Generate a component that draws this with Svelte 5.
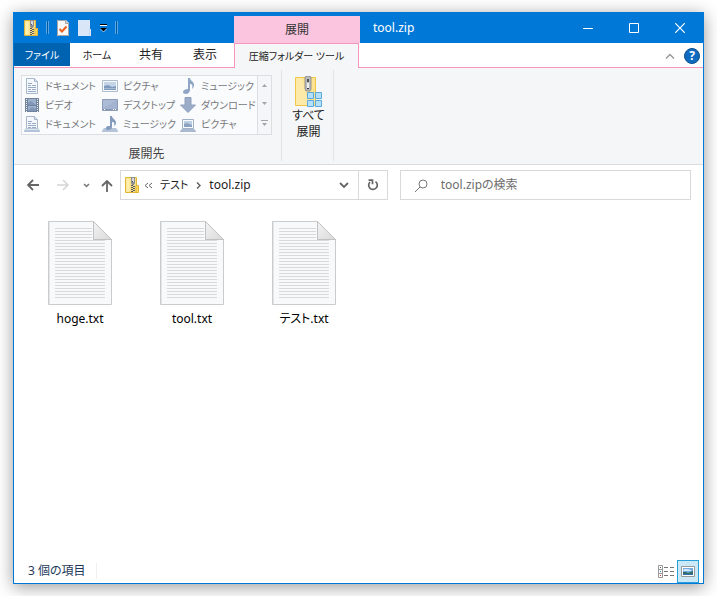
<script lang="ts">
	type Target = { icon: string; label: string };

	const tabs = ['ホーム', '共有', '表示'];

	const targets: Target[] = [
		{ icon: 'document', label: 'ドキュメント' },
		{ icon: 'picture', label: 'ピクチャ' },
		{ icon: 'music', label: 'ミュージック' },
		{ icon: 'video', label: 'ビデオ' },
		{ icon: 'desktop', label: 'デスクトップ' },
		{ icon: 'download', label: 'ダウンロード' },
		{ icon: 'document-lib', label: 'ドキュメント' },
		{ icon: 'music-lib', label: 'ミュージック' },
		{ icon: 'picture-lib', label: 'ピクチャ' }
	];

	const files = ['hoge.txt', 'tool.txt', 'テスト.txt'];
	const lines = Array.from({ length: 24 }, (_, i) => 7 + i * 3);

	let query = $state('');
	let selected = $state('');
</script>

<svelte:head>
	<title>tool.zip</title>
</svelte:head>

{#snippet zip()}
	<svg width="14" height="16" viewBox="0 0 14 16">
		<path d="M.5.5h11v8h1.500v7H.5z" fill="#fbe08a" stroke="#dfb53a" />
		<path d="M1.500 1.500h3v13h-3z" fill="#fff0ae" />
		<path d="M11 8.500h2.500v7H11z" fill="#ffd957" stroke="#dfb53a" />
		<path d="M6 0h4v6l-1 2H7L6 6z" fill="#8b8e91" />
		<path d="M7 1h2v4H7z" fill="#d8dadd" />
		<path d="M7 4h1v1H7zM6 8h2v1H6zM8 9h2v1H8zM6 10h2v1H6zM8 11h2v1H8zM6 12h2v1H6zM8 13h2v1H8zM6 14h2v1H6z" fill="#55585c" />
	</svg>
{/snippet}

{#snippet targetIcon(name: string)}
	<svg width="16" height="16" viewBox="0 0 16 16">
		{#if name === 'document' || name === 'document-lib'}
			<path d="M2.500.5h8l3 3v12h-11z" fill="#f4f8fd" stroke="#a8b7cc" />
			<path d="M10.500.5v3h3" fill="#d5e0ee" stroke="#a8b7cc" />
			<path d="M4 5.500h4M4 7.500h3M8 7.500h4M4 9.500h8M4 11.500h3M8 11.500h4M4 13.500h8" stroke="#98abc5" />
			{#if name === 'document-lib'}
				<path d="M2 12h12l2 3v1H0v-1z" fill="#b4c3d7" />
				<path d="M2 13.500h12" stroke="#dce5f0" />
			{/if}
		{:else if name === 'picture'}
			<path d="M.5 2.500h15v11H.5z" fill="#f7fafd" stroke="#aebdce" />
			<path d="M2 4h12v8H2z" fill="#c4d5e8" />
			<path d="M2 8l4-1 4 2 4-1v4H2z" fill="#7f9abf" />
			<path d="M2 10.500h12" stroke="#a6bbd3" />
		{:else if name === 'music'}
			<path d="M8 0h2c0 3 4 3 4 7 0 2-1 3-2 4 1-4 0-5-2-5v6c0 2-2 4-4 4s-3-1-3-2c0-2 3-3 5-3z" fill="#8fa5c5" />
		{:else if name === 'music-lib'}
			<path d="M2 12h12l2 3v1H0v-1z" fill="#b4c3d7" />
			<path d="M8 0h2c0 3 4 3 4 7 0 2-1 2-2 3 1-3 0-4-2-4v5c0 2-2 3-4 3s-2-1-2-2c0-2 2-2 4-2z" fill="#849bbd" />
		{:else if name === 'video'}
			<path d="M1 1h14v14H1z" fill="#72839c" />
			<path d="M4 2h8v6H4zM4 9h8v5H4z" fill="#9db0cc" />
			<path d="M4 6l3-2 5 4H4zM4 13l4-3 4 2v2H4z" fill="#8197b8" />
			<path d="M2.500 2v13M13.500 2v13" stroke="#edf2f8" stroke-dasharray="1 1" />
		{:else if name === 'desktop'}
			<path d="M.5 2.500h15v11H.5z" fill="#a3b3d0" stroke="#8d9db8" />
			<path d="M1 3h14L1 11z" fill="#adbcd6" />
			<path d="M1 12.500h14" stroke="#8796b0" />
			<path d="M2 12.500h1M11 12.500h3" stroke="#fff" stroke-dasharray="1 1" />
		{:else if name === 'download'}
			<path d="M5 .5h6V8h4.500L8 15.500.500 8H5z" fill="#9bacc9" stroke="#8fa0be" />
		{:else if name === 'picture-lib'}
			<path d="M2.500 3.500h11v9h-11z" fill="#f7fafd" stroke="#9fb0c7" />
			<path d="M4 5h8v6H4z" fill="#bccfe4" />
			<path d="M4 8l3-1 5 2v2H4z" fill="#8ba2c1" />
			<path d="M2 13h12l2 2v1H0v-1z" fill="#a8b9d0" />
		{/if}
	</svg>
{/snippet}

<main class="window">
	<header class="titlebar">
		<div class="quick">
			{@render zip()}
			<span class="grip"></span>
			<div class="shortcuts">
				<button aria-label="プロパティ">
					<svg width="12" height="16" viewBox="0 0 12 16">
						<path d="M0 0h9l3 3v13H0z" fill="#f8f8f8" />
						<path d="M.5.5h8l3 3v12H.5z" fill="none" stroke="#a5a5a5" />
						<path d="M8.500.5v3h3" fill="#ddd" stroke="#a5a5a5" />
						<path d="M2.500 9l2.500 2.500L9.500 6.500" fill="none" stroke="#ee6022" stroke-width="2" />
					</svg>
				</button>
				<button aria-label="新しいフォルダー">
					<svg width="13" height="16" viewBox="0 0 13 16">
						<path d="M0 0h12v9h1v7H0z" fill="#d9e6f8" />
						<path d="M11.500 9v6.500" stroke="#c1d5ef" />
					</svg>
				</button>
				<button aria-label="カスタマイズ">
					<svg width="7" height="8" viewBox="0 0 7 8">
						<path d="M0 0h7v1H0z" fill="#000" />
						<path d="M0 1h7v1H0z" fill="#fff" />
						<path d="M0 4h7L3.500 7.500z" fill="#000" />
						<path d="M0 4.500l3.500 3.500L7 4.500" fill="none" stroke="#fff" stroke-width=".6" />
					</svg>
				</button>
			</div>
			<span class="grip"></span>
		</div>
		<div class="context">展開</div>
		<h1>tool.zip</h1>
		<div class="controls">
			<button aria-label="最小化">
				<svg width="10" height="10"><path d="M0 5.500h10" stroke="#fff" /></svg>
			</button>
			<button aria-label="最大化">
				<svg width="10" height="10"><path d="M.5.5h9v9h-9z" fill="none" stroke="#fff" /></svg>
			</button>
			<button aria-label="閉じる">
				<svg width="10" height="10"><path d="M0 0l10 10M10 0L0 10" stroke="#fff" stroke-width="1.200" /></svg>
			</button>
		</div>
	</header>

	<nav class="tabs">
		<button class="file">ファイル</button>
		{#each tabs as tab}
			<button class="tab">{tab}</button>
		{/each}
		<button class="tab active">圧縮フォルダー ツール</button>
		<div class="help">
			<button aria-label="リボンの最小化">
				<svg width="10" height="6"><path d="M1 5.500l4-4 4 4" fill="none" stroke="#9a9a9a" stroke-width="1.500" /></svg>
			</button>
			<button class="question" aria-label="ヘルプ">?</button>
		</div>
	</nav>

	<section class="ribbon">
		<div class="group">
			<div class="gallery">
				<div class="targets">
					{#each targets as target}
						<button disabled>
							{@render targetIcon(target.icon)}
							<span>{target.label}</span>
						</button>
					{/each}
				</div>
				<div class="scroll">
					<button disabled aria-label="上へ">
						<svg width="5" height="3"><path d="M0 3L2.500 0 5 3z" fill="#a0a4ad" /></svg>
					</button>
					<button disabled aria-label="下へ">
						<svg width="5" height="3"><path d="M0 0l2.500 3L5 0z" fill="#a0a4ad" /></svg>
					</button>
					<button disabled aria-label="その他">
						<svg width="7" height="6"><path d="M0 .5h7" stroke="#a0a4ad" /><path d="M1 3l2.500 3L6 3z" fill="#a0a4ad" /></svg>
					</button>
				</div>
			</div>
			<div class="caption">展開先</div>
		</div>
		<button class="extract">
			<svg width="28" height="32" viewBox="0 0 28 32">
				<path d="M.5 1.500h20v28H.5z" fill="#fce293" stroke="#efc84a" />
				<path d="M1 2h6l7 27H1z" fill="#fdeaa9" />
				<path d="M10 1q3-2 6 0v12l-1 2h-4l-1-2z" fill="#b9bbbe" stroke="#77797c" stroke-width=".7" />
				<path d="M12 3h2v3h-2z" fill="#55575a" />
				<path d="M12 7h2v5h-2z" fill="#eee" />
				<path d="M12 12h2v1h-2z" fill="#333" />
				<path d="M12.500 16.500h6v6h-6zM20.500 16.500h6v6h-6zM12.500 24.500h6v6h-6zM20.500 24.500h6v6h-6z" fill="#b5e0fb" stroke="#5ba9dc" />
			</svg>
			<span>すべて</span>
			<span>展開</span>
		</button>
	</section>

	<div class="address">
		<div class="history">
			<button aria-label="戻る">
				<svg width="12" height="12"><path d="M12 6H1M6 1L1 6l5 5" fill="none" stroke="#666" stroke-width="1.800" /></svg>
			</button>
			<button disabled aria-label="進む">
				<svg width="12" height="12"><path d="M0 6h11M6 1l5 5-5 5" fill="none" stroke="#d5d5d5" stroke-width="1.500" /></svg>
			</button>
			<button class="recent" aria-label="最近表示した場所">
				<svg width="7" height="5"><path d="M1 1l2.500 2.500L6 1" fill="none" stroke="#777" stroke-width="1.500" /></svg>
			</button>
			<button aria-label="上へ">
				<svg width="12" height="13"><path d="M6 13V2M1 7l5-5 5 5" fill="none" stroke="#666" stroke-width="1.800" /></svg>
			</button>
		</div>
		<div class="path">
			{@render zip()}
			<svg class="chevrons" width="9" height="7"><path d="M4 1L1 3.500 4 6M8 1L5 3.500 8 6" fill="none" stroke="#666" /></svg>
			<button class="crumb">テスト</button>
			<svg class="chevron" width="5" height="7"><path d="M1 .5l3 3-3 3" fill="none" stroke="#666" stroke-width="1.500" /></svg>
			<button>tool.zip</button>
			<button class="drop" aria-label="以前の場所">
				<svg width="10" height="7"><path d="M1 1l4 4 4-4" fill="none" stroke="#666" stroke-width="1.800" /></svg>
			</button>
			<button class="refresh" aria-label="更新">
				<svg width="12" height="12" viewBox="0 0 12 12">
					<path d="M3 3A4.300 4.300 0 1 0 8.500 2.600" fill="none" stroke="#666" stroke-width="1.700" />
					<path d="M1.500 1.200h4v4" fill="none" stroke="#666" stroke-width="1.700" />
				</svg>
			</button>
		</div>
		<label class="search">
			<svg width="13" height="13"><circle cx="8" cy="5" r="4" fill="none" stroke="#777" /><path d="M5 8l-5 5" stroke="#777" /></svg>
			<input type="text" bind:value={query} placeholder="tool.zipの検索" aria-label="tool.zipの検索" />
		</label>
	</div>

	<section class="files">
		{#each files as file}
			<button class:selected={selected === file} onclick={() => (selected = file)}>
				<svg width="64" height="84" viewBox="0 0 64 84">
					<defs>
						<linearGradient id="fold" x1="0" y1="0" x2="1" y2="1">
							<stop offset="0" stop-color="#f4f4f4" />
							<stop offset="1" stop-color="#d9d9d9" />
						</linearGradient>
					</defs>
					<path d="M.5.5h45l18 18v65H.5z" fill="#f8f9fa" stroke="#c9cbcd" />
					<path d="M1.500 1v82" stroke="#e5e6e7" />
					{#each lines as y}
						<path d="M7 {y + 0.5}H{y < 19 ? 44 : 57}" stroke="#d7d9db" />
					{/each}
					<path d="M45.500.5v18h18z" fill="url(#fold)" stroke="#c0c1c2" />
				</svg>
				<span>{file}</span>
			</button>
		{/each}
	</section>

	<footer class="status">
		<span class="count">3 個の項目</span>
		<button class="view" aria-label="詳細">
			<svg width="16" height="13" viewBox="0 0 16 13">
				<path d="M.5.5h4v12h-4zM.5 4.500h4M.5 8.500h4" fill="#fff" stroke="#999" />
				<path d="M2 2h1v1H2z" fill="#555" /><path d="M2 6h1v1H2z" fill="#3b82c4" /><path d="M2 10h1v1H2z" fill="#c33" />
				<path d="M6 2.500h4M12 2.500h4M6 6.500h4M12 6.500h4M6 10.500h4M12 10.500h4" stroke="#777" />
			</svg>
		</button>
		<button class="view current" aria-label="大アイコン">
			<svg width="14" height="11" viewBox="0 0 14 11">
				<path d="M.5.5h13v10H.5z" fill="#fff" stroke="#999" />
				<path d="M2 2h10v7H2z" fill="#72abe1" />
				<path d="M3 3h4l3 1v1H2z" fill="#d4e8f9" />
				<path d="M2 6h3l2 1 5-2v4H2z" fill="#326e66" />
				<path d="M2 8.500h10" stroke="#3771ac" />
			</svg>
		</button>
	</footer>
</main>

<style>
	:global(body) {
		margin: 0;
		background: #fff;
		font: 12px/16px 'Noto Sans', 'Noto Sans CJK JP', sans-serif;
		font-feature-settings: 'palt';
		color: #222;
	}

	.window {
		box-sizing: border-box;
		display: flex;
		flex-direction: column;
		min-height: calc(100vh - 24px);
		margin: 12px 13px;
		border: 1px solid #0078d7;
		border-top: 0;
		background: #fff;
		box-shadow: 0 3px 16px rgba(0, 0, 0, 0.4);
	}

	button {
		display: flex;
		align-items: center;
		justify-content: center;
		padding: 0;
		border: 0;
		background: none;
		font: inherit;
		font-feature-settings: inherit;
		color: inherit;
		white-space: nowrap;
	}

	svg {
		display: block;
		flex: none;
	}

	.titlebar {
		display: flex;
		height: 31px;
		background: #0078d7;
		color: #fff;
	}

	.quick {
		box-sizing: border-box;
		display: flex;
		align-items: center;
		gap: 8px;
		width: 220px;
		padding-left: 10px;
	}

	.shortcuts {
		display: flex;
		gap: 9px;
	}

	.grip {
		box-sizing: border-box;
		width: 3px;
		height: 13px;
		border: solid #5aa5e3;
		border-width: 0 1px;
		background: #005a9e;
	}

	.context {
		width: 126px;
		margin-top: 4px;
		background: #fbc5df;
		color: #333;
		line-height: 27px;
		text-align: center;
	}

	h1 {
		flex: 1;
		margin: 0;
		padding-left: 13px;
		font-size: 12px;
		font-weight: 400;
		line-height: 31px;
	}

	.controls {
		display: flex;
	}

	.controls button {
		width: 46px;
	}

	.tabs {
		display: flex;
		height: 25px;
		box-shadow: inset 0 -1px #f797bd;
	}

	.file {
		width: 56px;
		height: 23px;
		background: #0063b1;
		color: #fff;
		font-size: 10px;
	}

	.tab {
		width: 54px;
		height: 24px;
	}

	.tab:nth-child(2) {
		font-size: 10px;
	}

	.tab.active {
		box-sizing: border-box;
		width: 125px;
		height: 25px;
		margin-left: 2px;
		border: 1px solid #f797bd;
		border-bottom: 0;
		background: #f5f6f7;
		font-size: 10px;
	}

	.help {
		display: flex;
		align-items: center;
		gap: 9px;
		margin-left: auto;
		padding-right: 3px;
	}

	.question {
		box-sizing: border-box;
		width: 16px;
		height: 16px;
		border: 1px solid #0b4f8c;
		border-radius: 50%;
		background: #0f6ac0;
		color: #fff;
		font-weight: 700;
	}

	.ribbon {
		display: flex;
		height: 96px;
		border-bottom: 1px solid #dadbdc;
		background: #f5f6f7;
	}

	.group {
		padding: 7px 9px 0 7px;
	}

	.gallery {
		box-sizing: border-box;
		display: flex;
		width: 251px;
		height: 60px;
		border: 1px solid #dcdee1;
		background: #fafbfc;
	}

	.targets {
		flex: 1;
		display: grid;
		grid-template-columns: 78px 78px 79px;
		grid-template-rows: repeat(3, 1fr);
	}

	.targets button {
		gap: 5px;
		padding-left: 2px;
		justify-content: flex-start;
		color: #77797d;
		font-size: 10px;
	}

	.scroll {
		display: grid;
		width: 14px;
		border-left: 1px solid #dcdee1;
		background: #f5f6f7;
	}

	.caption {
		margin-top: 11px;
		color: #444;
		text-align: center;
	}

	.extract {
		flex-direction: column;
		justify-content: flex-start;
		width: 53px;
		height: 91px;
		margin-top: 2px;
		padding: 6px 0 0 2px;
		border: solid #e2e3e4;
		border-width: 0 1px;
	}

	.address {
		display: grid;
		grid-template-columns: 106px 268fr 291fr;
		height: 30px;
		padding: 5px 12px 0 0;
	}

	.history {
		box-sizing: border-box;
		display: flex;
		align-items: center;
		gap: 18px;
		width: 106px;
		padding-left: 13px;
	}

	.history .recent {
		margin-right: -7px;
		margin-left: -4px;
	}

	.path,
	.search {
		box-sizing: border-box;
		display: flex;
		align-items: center;
		border: 1px solid #d9d9d9;
	}

	.path {
		margin-right: 6px;
		padding-left: 4px;
	}

	.search {
		gap: 13px;
		margin-left: 6px;
		padding-left: 14px;
	}

	.chevrons {
		margin: 0 7px 0 5px;
	}

	.crumb {
		font-size: 11px;
	}

	.chevron {
		margin: 0 8px;
	}

	.path .drop {
		width: 28px;
		height: 28px;
		margin-left: auto;
	}

	.path .refresh {
		width: 29px;
		height: 28px;
		border-left: 1px solid #d9d9d9;
	}

	input {
		flex: 1;
		min-width: 0;
		padding: 0;
		border: 0;
		outline: 0;
		background: none;
		font: inherit;
		font-feature-settings: inherit;
	}

	input::placeholder {
		color: #6d6d6d;
	}

	.files {
		flex: 1;
		display: flex;
		flex-wrap: wrap;
		align-content: flex-start;
		padding: 16px 10px;
	}

	.files button {
		flex-direction: column;
		gap: 6px;
		width: 112px;
		padding: 5px 0;
		color: #000;
	}

	.files .selected {
		background: #cce8ff;
	}

	.status {
		display: flex;
		align-items: center;
		height: 24px;
		padding-right: 4px;
	}

	.count {
		margin-right: auto;
		padding: 0 10px 0 14px;
		border-right: 1px solid #f0f0f0;
		color: #1e395b;
	}

	.view {
		box-sizing: border-box;
		width: 22px;
		height: 23px;
	}

	.current {
		border: 1px solid #26a0da;
		background: #cbe8f6;
	}
</style>
